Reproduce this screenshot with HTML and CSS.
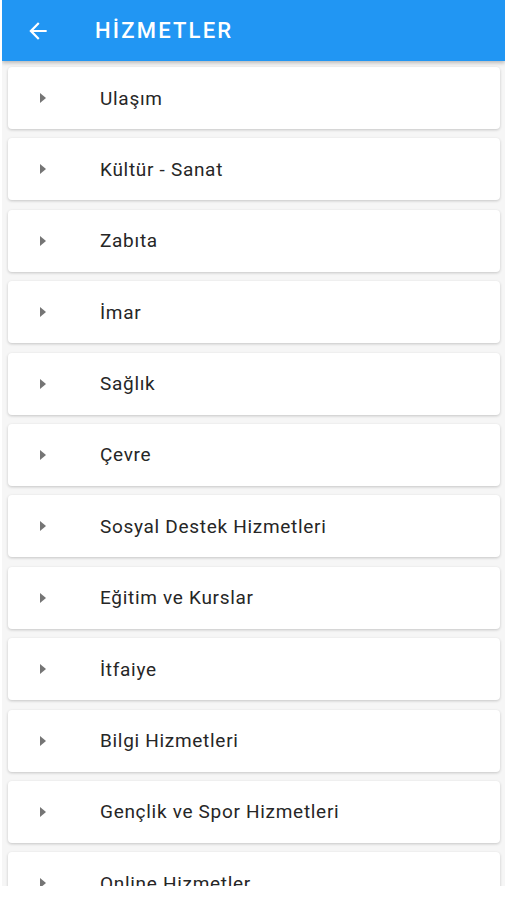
FILE: index.html
```html
<!DOCTYPE html>
<html lang="tr">
<head>
  <meta charset="UTF-8" />
  <meta name="viewport" content="width=device-width, initial-scale=1.0"/>
  <title>Hizmetler</title>
  <link rel="stylesheet" href="styles.css">
</head>
<body>
  <div class="screen">
    <header class="app-bar">
      <button class="btn-back" aria-label="Geri">
        <svg width="26" height="26" viewBox="0 0 24 24"><path d="M20 11H7.83l5.59-5.59L12 4l-8 8 8 8 1.41-1.41L7.83 13H20v-2z" fill="#fff"/></svg>
      </button>
      <div class="app-title">HİZMETLER</div>
    </header>

    <ul class="service-list">
      <li class="service-item"><span class="caret"></span><span class="service-name">Ulaşım</span></li>
      <li class="service-item"><span class="caret"></span><span class="service-name">Kültür - Sanat</span></li>
      <li class="service-item"><span class="caret"></span><span class="service-name">Zabıta</span></li>
      <li class="service-item"><span class="caret"></span><span class="service-name">İmar</span></li>
      <li class="service-item"><span class="caret"></span><span class="service-name">Sağlık</span></li>
      <li class="service-item"><span class="caret"></span><span class="service-name">Çevre</span></li>
      <li class="service-item"><span class="caret"></span><span class="service-name">Sosyal Destek Hizmetleri</span></li>
      <li class="service-item"><span class="caret"></span><span class="service-name">Eğitim ve Kurslar</span></li>
      <li class="service-item"><span class="caret"></span><span class="service-name">İtfaiye</span></li>
      <li class="service-item"><span class="caret"></span><span class="service-name">Bilgi Hizmetleri</span></li>
      <li class="service-item"><span class="caret"></span><span class="service-name">Gençlik ve Spor Hizmetleri</span></li>
      <li class="service-item"><span class="caret"></span><span class="service-name">Online Hizmetler</span></li>
    </ul>
  </div>
</body>
</html>
```

FILE: styles.css
```css
body {
  margin: 0;
  background: #fff;
  font-family: Roboto, "Noto Sans", Arial, sans-serif;
}

.screen {
  width: 503px;
  height: 886px;
  margin-left: 2px;
  background: #f6f6f6;
  overflow: hidden;
  position: relative;
}

.app-bar {
  height: 61px;
  background: #2196f3;
  display: flex;
  align-items: center;
  box-shadow: 0 2px 4px rgba(0,0,0,0.25);
  position: relative;
  z-index: 1;
}

.btn-back {
  width: 26px;
  height: 26px;
  padding: 0;
  margin-left: 23px;
  border: none;
  background: none;
  display: flex;
}

.app-title {
  margin-left: 44px;
  color: #fff;
  font-size: 22px;
  font-weight: 500;
  letter-spacing: 2.2px;
}

.service-list {
  list-style: none;
  margin: 0;
  padding: 6px 5px 0 6px;
  display: flex;
  flex-direction: column;
  gap: 9.4px;
}

.service-item {
  height: 62px;
  flex-shrink: 0;
  background: #fff;
  border-radius: 4px;
  box-shadow: 0 1px 3px rgba(0,0,0,0.2);
  display: flex;
  align-items: center;
}

.caret {
  width: 0;
  height: 0;
  margin-left: 32px;
  border-top: 5px solid transparent;
  border-bottom: 5px solid transparent;
  border-left: 6px solid #757575;
}

.service-name {
  margin-left: 54px;
  font-size: 19px;
  letter-spacing: 0.7px;
  color: #262626;
}
```
